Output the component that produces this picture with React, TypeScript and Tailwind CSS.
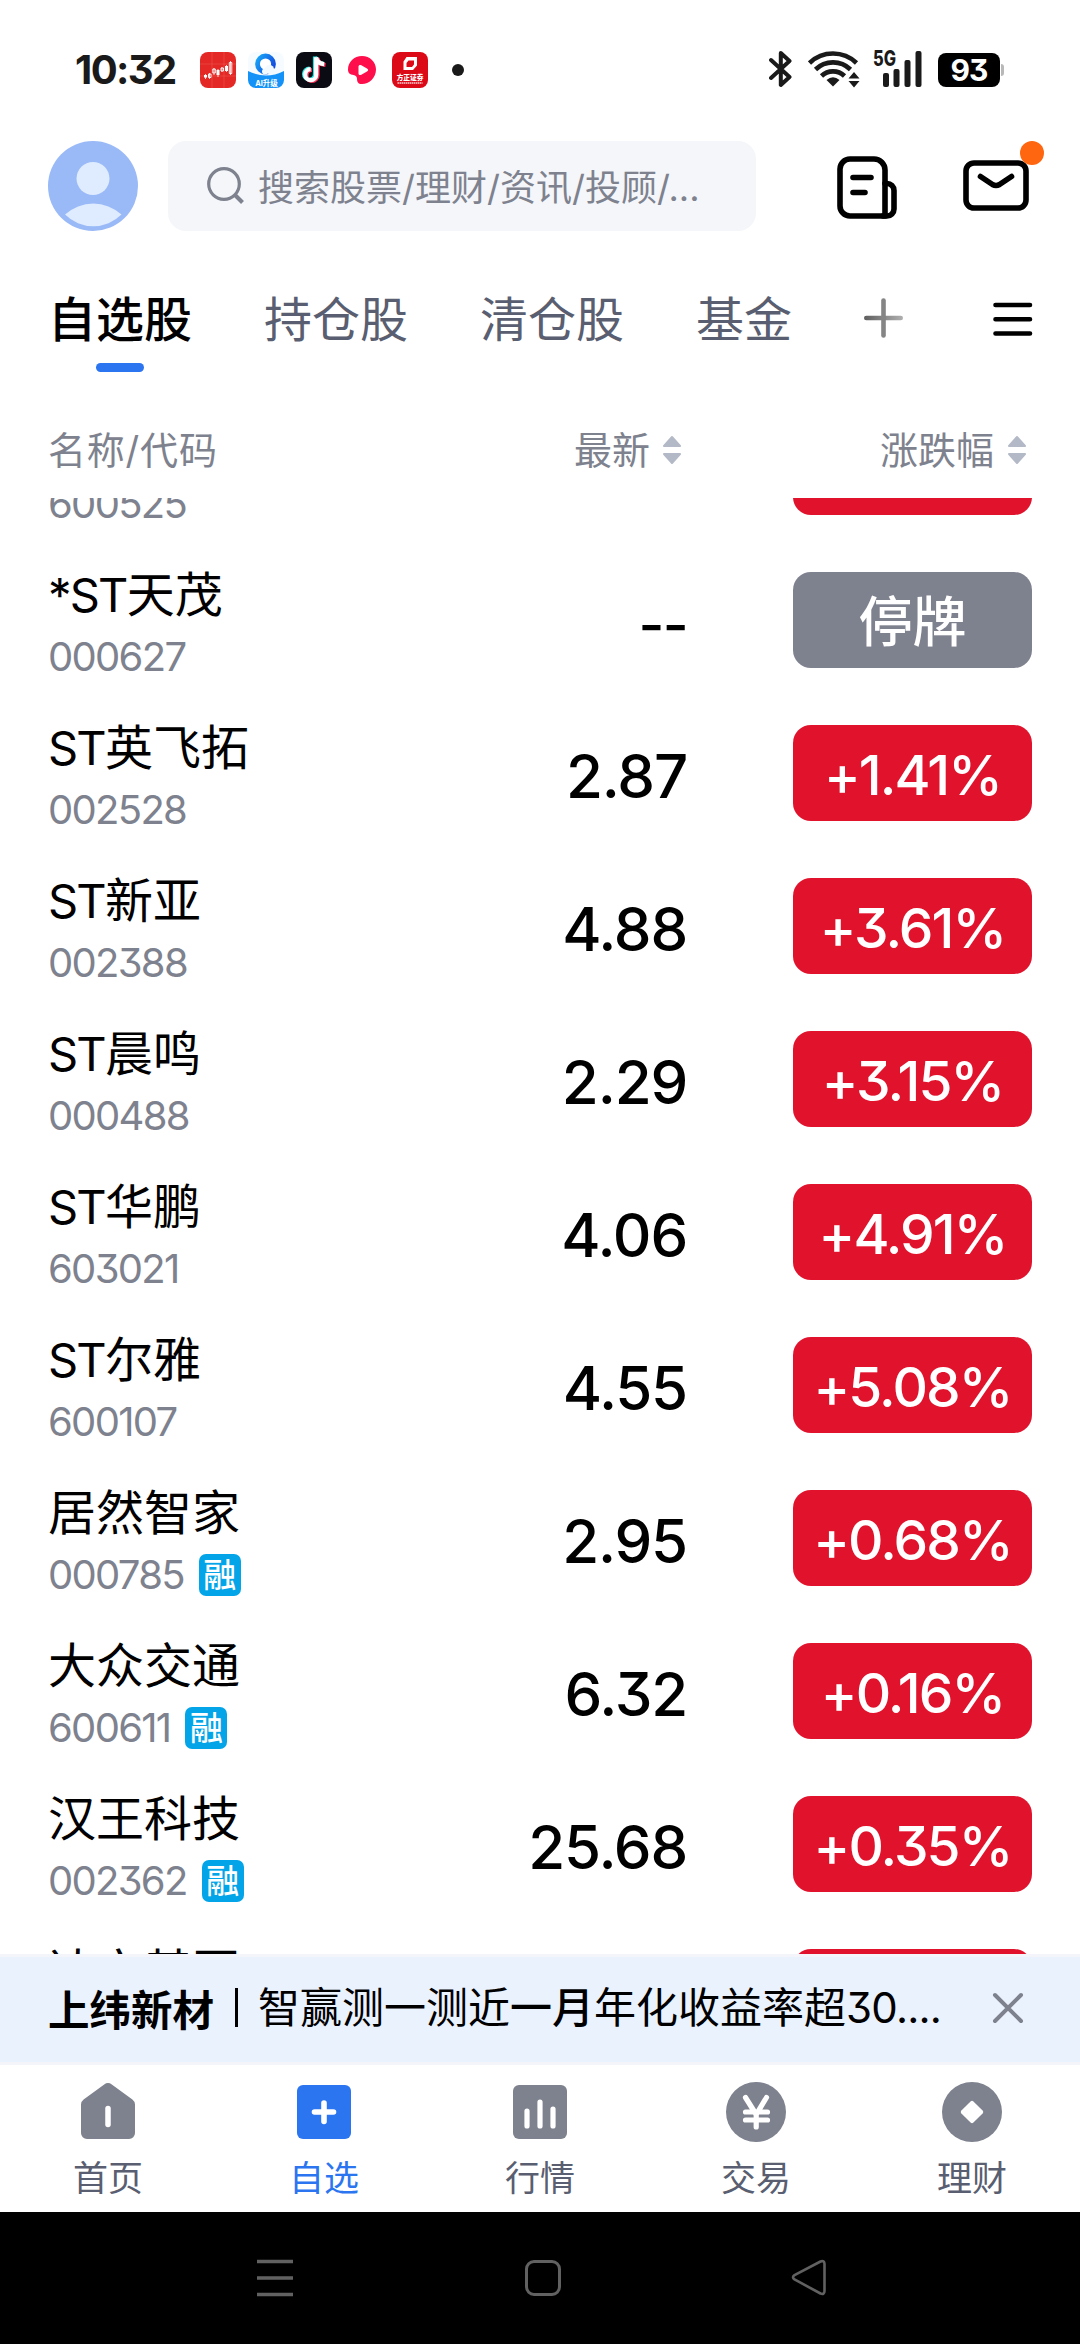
import type { ReactNode } from 'react';

interface Stock {
  prefix?: string;
  name: string;
  code: string;
  price: string;
  change: string | null;
  margin?: boolean;
}

interface NavItem {
  label: string;
  icon: ReactNode;
  active?: boolean;
}

const stocks: Stock[] = [
  { name: '', code: '600525', price: '', change: '' },
  { prefix: '*ST', name: '天茂', code: '000627', price: '--', change: null },
  { prefix: 'ST', name: '英飞拓', code: '002528', price: '2.87', change: '+1.41%' },
  { prefix: 'ST', name: '新亚', code: '002388', price: '4.88', change: '+3.61%' },
  { prefix: 'ST', name: '晨鸣', code: '000488', price: '2.29', change: '+3.15%' },
  { prefix: 'ST', name: '华鹏', code: '603021', price: '4.06', change: '+4.91%' },
  { prefix: 'ST', name: '尔雅', code: '600107', price: '4.55', change: '+5.08%' },
  { name: '居然智家', code: '000785', price: '2.95', change: '+0.68%', margin: true },
  { name: '大众交通', code: '600611', price: '6.32', change: '+0.16%', margin: true },
  { name: '汉王科技', code: '002362', price: '25.68', change: '+0.35%', margin: true },
  { name: '达安基因', code: '', price: '', change: '' }
];

const groups = ['自选股', '持仓股', '清仓股', '基金'];

const navItems: NavItem[] = [
  {
    label: '首页',
    icon: (
      <svg viewBox="0 0 60 60" className="h-[60px] w-[60px]">
        <path d="M26.2 2.4a6.2 6.2 0 0 1 7.6 0L54.4 17.6a6.5 6.5 0 0 1 2.6 5V51a6 6 0 0 1-6 6H9a6 6 0 0 1-6-6V22.6a6.5 6.5 0 0 1 2.6-5Z" fill="#7e828e" />
        <path d="M30 26.5v16" stroke="#fff" strokeWidth="5.5" strokeLinecap="round" />
      </svg>
    )
  },
  {
    label: '自选',
    active: true,
    icon: (
      <svg viewBox="0 0 60 60" className="h-[60px] w-[60px]">
        <rect x="3" y="3" width="54" height="54" rx="6" fill="#2c75f0" />
        <path d="M30 21v18.500M20.500 30h19" stroke="#fff" strokeWidth="5.6" strokeLinecap="round" />
      </svg>
    )
  },
  {
    label: '行情',
    icon: (
      <svg viewBox="0 0 60 60" className="h-[60px] w-[60px]">
        <rect x="3" y="3" width="54" height="54" rx="6" fill="#7e828e" />
        <path d="M17 29v15M30 20v24M43 27v17" stroke="#fff" strokeWidth="5.2" strokeLinecap="round" />
      </svg>
    )
  },
  {
    label: '交易',
    icon: (
      <svg viewBox="0 0 60 60" className="h-[60px] w-[60px]">
        <circle cx="30" cy="30" r="30" fill="#7e828e" />
        <path d="M19.5 15.500 30.2 32.5 40.5 15.500M30.2 32v13M19.500 30h22M19.500 38h22" fill="none" stroke="#fff" strokeWidth="5.2" strokeLinecap="round" strokeLinejoin="round" />
      </svg>
    )
  },
  {
    label: '理财',
    icon: (
      <svg viewBox="0 0 60 60" className="h-[60px] w-[60px]">
        <circle cx="30" cy="30" r="30" fill="#7e828e" />
        <rect x="21.500" y="21.500" width="17" height="17" rx="2" transform="rotate(45 30 30)" fill="#fff" />
      </svg>
    )
  }
];

function StatusBar() {
  return (
    <div className="flex h-[141px] items-start justify-between pl-[75px] pr-[76px] pt-[50px] text-[#1a1a1a]">
      <div className="flex h-10 items-center">
        <span className="w-[125px] whitespace-nowrap text-[40px] font-bold leading-10 tracking-[-1.6px]">10:32</span>
        <div className="flex items-center gap-3">
          <svg viewBox="0 0 36 36" className="h-9 w-9">
            <rect width="36" height="36" rx="8" fill="#e32826" />
            <path d="M0 12h36M0 24h36M12 0v36M24 0v36" stroke="#ee5a50" strokeWidth=".5" />
            <path d="M5.5 22v5M9.5 21v6M14 16v7M18 17v8M22 15v5M26.5 13v7M30.5 9v14" stroke="#fff" strokeWidth=".8" />
            <path d="M4 23h3v2.500H4ZM16.500 18h3v5h-3ZM25 14h3v5h-3Z" fill="#fff" />
            <path d="M8.500 22h2.500v3.500H8.500ZM12.800 17h2.500v4h-2.500ZM21 16h2.500v3H21ZM29.300 10.500h2.500v11h-2.500Z" fill="none" stroke="#fff" strokeWidth=".9" />
          </svg>
          <svg viewBox="0 0 36 36" className="h-9 w-9">
            <defs>
              <linearGradient id="ring" x1="0" y1="0" x2="1" y2=".6">
                <stop stopColor="#17a6f7" />
                <stop offset="1" stopColor="#1450e0" />
              </linearGradient>
            </defs>
            <rect width="36" height="36" rx="8" fill="#f5fbff" />
            <circle cx="17.5" cy="12" r="8" fill="#fff" stroke="url(#ring)" strokeWidth="4.8" />
            <g fill="#f3faff">
              <circle cx="21.5" cy="17.5" r="4.5" />
              <circle cx="17" cy="19.500" r="3" />
              <circle cx="26" cy="19.500" r="3" />
            </g>
            <path d="M0 19q18 9 36 0v9a8 8 0 0 1-8 8H8a8 8 0 0 1-8-8Z" fill="#1592f8" />
            <text x="18.5" y="33.500" textAnchor="middle" fontSize="7.5" fontWeight="700" fill="#fff">AI升级</text>
          </svg>
          <svg viewBox="0 0 36 36" className="h-9 w-9">
            <rect width="36" height="36" rx="8" fill="#0b0b14" />
            <g fill="none" strokeWidth="4.2">
              <path d="M20 5v17.500a5.500 5.500 0 1 1-5.500-5.500M20 5c.5 4 3.500 6.500 8 7" stroke="#25e5e0" transform="translate(-1 -.5)" />
              <path d="M20 5v17.500a5.500 5.500 0 1 1-5.500-5.500M20 5c.5 4 3.500 6.500 8 7" stroke="#fb3158" transform="translate(1.5 1)" />
              <path d="M20 5v17.500a5.500 5.500 0 1 1-5.500-5.500M20 5c.5 4 3.500 6.500 8 7" stroke="#fff" transform="translate(.2 .2)" />
            </g>
          </svg>
          <svg viewBox="0 0 36 36" className="h-9 w-9">
            <path d="M18 4c8 0 14 6 14 13.500C32 26 25 32 18 32c-4 0-5-2-5-5.500-.2-2-1.200-3-3.500-3.500C6 22.500 4 21 4 17.500 4 10 10 4 18 4Z" fill="#fe0f4b" />
            <path d="M14.500 14.500c0-1.500 1.500-2 2.800-1.300l5.700 3.300c1.500.8 1.500 2.200 0 3l-5.700 3.300c-1.300.7-2.800.2-2.800-1.300Z" fill="#fff" />
          </svg>
          <svg viewBox="0 0 36 36" className="h-9 w-9">
            <rect width="36" height="36" rx="8" fill="#dc0a17" />
            <path d="M14.500 5H25v8.500L21 18H11.500V9.500ZM16.500 8.500 14.500 11v4h5.500l2-2.500v-4Z" fill="#fff" fillRule="evenodd" />
            <text x="18" y="28" textAnchor="middle" fontSize="6.7" fontWeight="900" fill="#fff">方正证券</text>
            <path d="M5.500 31h25" stroke="#fff" strokeWidth="1.3" strokeDasharray="1.5 .5" opacity=".8" />
          </svg>
        </div>
        <span className="ml-6 h-3 w-3 rounded-full bg-[#1a1a1a]" />
      </div>
      <div className="flex items-start">
        <svg viewBox="0 0 24 38" className="mr-[15px] h-[38px] w-6">
          <path d="M2 10 20.500 27 11.800 35V3L20.500 11 2 28" fill="none" stroke="#1a1a1a" strokeWidth="4" strokeLinejoin="round" strokeLinecap="round" />
        </svg>
        <svg viewBox="0 0 52 38" className="mr-[13px] h-[38px] w-[52px]">
          <g fill="none" stroke="#1a1a1a" strokeWidth="4.6">
            <path d="M1.500 13a34 34 0 0 1 47 0" />
            <path d="M7.500 19.500a25 25 0 0 1 35 0" />
            <path d="M13.500 26a16.500 16.500 0 0 1 23 0" />
          </g>
          <path d="M25 36.500 18.500 30q6.500-5.500 13 0Z" fill="#1a1a1a" />
          <path d="M40.500 28.500 46 22l5.500 6.500ZM40.500 31h11L46 37.500Z" fill="#1a1a1a" />
        </svg>
        <svg viewBox="0 0 50 38" className="mr-[15px] h-[38px] w-[50px]">
          <text x="0" y="16" fontSize="21" fontWeight="800" fill="#1a1a1a" textLength="23" lengthAdjust="spacingAndGlyphs">5G</text>
          <g fill="#1a1a1a">
            <rect x="10" y="23" width="6" height="14" rx="2" />
            <rect x="20.500" y="19" width="6" height="18" rx="2" />
            <rect x="31.500" y="10" width="6" height="27" rx="2" />
            <rect x="42.500" y="1" width="6" height="36" rx="2" />
          </g>
        </svg>
        <div className="flex items-center pt-[3px]">
          <span className="flex h-[34px] w-[62px] items-center justify-center rounded-[8px] bg-black text-[30px] font-bold leading-none tracking-[-1px] text-white">
            93
          </span>
          <span className="ml-px h-3 w-[3px] rounded-r-[3px] bg-[#b8b8b8]" />
        </div>
      </div>
    </div>
  );
}

function SearchHeader() {
  return (
    <div className="flex h-[90px] items-center pl-12">
      <svg viewBox="0 0 90 90" className="h-[90px] w-[90px]">
        <circle cx="45" cy="45" r="45" fill="#99b9f7" />
        <circle cx="45" cy="37.5" r="16.5" fill="#dfebfe" />
        <path d="M17 73.500a42 42 0 0 1 56.500 0 40 40 0 0 1-56.500 0Z" fill="#dfebfe" />
      </svg>
      <div className="ml-[30px] flex h-[90px] w-[588px] items-center rounded-[18px] bg-[#f4f6fa] pl-[38px]">
        <svg viewBox="0 0 40 40" className="h-10 w-10" fill="none" stroke="#7e828e" strokeWidth="3.2">
          <circle cx="18" cy="18" r="15.3" />
          <path d="m28.500 28.500 8 8" strokeWidth="4" />
        </svg>
        <span className="ml-3 whitespace-nowrap pt-[3px] text-[36px] leading-10 text-[#7e828e]">
          搜索股票/理财/资讯/投顾/...
        </span>
      </div>
      <svg viewBox="0 0 62 66" className="ml-[80px] mt-1 h-[66px] w-[62px]" fill="none" stroke="#000" strokeWidth="5.6" strokeLinecap="round" strokeLinejoin="round">
        <path d="M14 4h24a11 11 0 0 1 11 11v46H14A10 10 0 0 1 4 51V14A10 10 0 0 1 14 4Z" />
        <path d="M49 28.500h2a7 7 0 0 1 7 7V54a7 7 0 0 1-7 7h-4M17 22.500h18M17 37.500h12" />
      </svg>
      <div className="relative ml-16 h-[52px] w-[68px]">
        <svg viewBox="0 0 68 52" className="h-[52px] w-[68px]" fill="none" stroke="#000" strokeWidth="5.6" strokeLinecap="round" strokeLinejoin="round">
          <rect x="4" y="3" width="60" height="45" rx="8" />
          <path d="m18.500 16.500 12 8q3.500 2 7 0l12-8" />
        </svg>
        <span className="absolute -top-[19px] left-[58px] h-6 w-6 rounded-full bg-[#ff660f]" />
      </div>
    </div>
  );
}

function GroupTabs() {
  return (
    <div className="flex h-[165px] items-start pl-12 pt-[61px]">
      <div className="flex gap-[72px]">
        {groups.map((group, index) => (
          <div key={group} className="flex flex-col items-center">
            <span className={`whitespace-nowrap text-[48px] leading-[56px] ${index === 0 ? 'font-medium text-black' : 'text-[#595e70]'}`}>
              {group}
            </span>
            {index === 0 && <span className="mt-[15px] h-[9px] w-12 rounded-full bg-[#2c75f0]" />}
          </div>
        ))}
      </div>
      <svg viewBox="0 0 40 40" className="ml-[71px] mt-[6px] h-10 w-10" strokeLinecap="round" strokeWidth="4.6">
        <defs>
          <linearGradient id="plus" gradientUnits="userSpaceOnUse" x1="0" y1="0" x2="40" y2="0">
            <stop stopColor="#5c5c5c" />
            <stop offset="1" stopColor="#b0b0b0" />
          </linearGradient>
        </defs>
        <rect x="1" y="17.700" width="39" height="4.600" rx="2.300" fill="url(#plus)" />
        <path d="M20.500 2.500v35" stroke="#858585" />
      </svg>
      <svg viewBox="0 0 40 40" className="ml-[90px] mt-[7px] h-10 w-10" stroke="#000" strokeLinecap="round" strokeWidth="4.6">
        <path d="M2.500 6h34.500M2.500 20.300h34.500M2.500 34.500h34.500" />
      </svg>
    </div>
  );
}

function SortArrows() {
  return (
    <svg viewBox="0 0 18 30" className="h-[30px] w-[18px]" fill="#b3b9c6" stroke="#b3b9c6" strokeWidth="2" strokeLinejoin="round">
      <path d="M9 2 17 11H1ZM9 28 17 19H1Z" />
    </svg>
  );
}

function ColumnHeader() {
  return (
    <div className="flex h-[102px] items-center pl-12 pt-[6px] text-[38px] leading-[42px] text-[#7e828e]">
      <span className="w-[300px] tracking-[0.8px]">名称/代码</span>
      <div className="flex w-[333px] items-center justify-end gap-[13px]">
        最新
        <SortArrows />
      </div>
      <div className="flex w-[345px] items-center justify-end gap-[14px]">
        涨跌幅
        <SortArrows />
      </div>
    </div>
  );
}

function StockRow({ stock }: { stock: Stock }) {
  const suspended = stock.change === null;

  return (
    <div className="flex h-[153px] shrink-0 items-start pl-12">
      <div className="w-[340px] pt-[25px]">
        <div className="h-[54px] whitespace-nowrap text-[48px] leading-[54px] text-black">
          {stock.prefix && <span className="text-[47px] tracking-[-1.8px]">{stock.prefix}</span>}
          {stock.name}
        </div>
        <div className="mt-[14px] flex h-[42px] items-center">
          <span className="text-[40px] leading-[42px] tracking-[-1.7px] text-[#7e828e]">{stock.code}</span>
          {stock.margin && (
            <span className="ml-[15px] flex h-[42px] w-[42px] items-center justify-center rounded-[7px] bg-[#04a4e8] text-[33px] font-medium leading-none text-white">
              融
            </span>
          )}
        </div>
      </div>
      <div className="w-[299px] pt-[50px] text-right text-[60px] font-medium leading-[60px] tracking-[-1.2px] text-black">
        {suspended ? <span className="text-[56px] tracking-[-1.6px]">{stock.price}</span> : stock.price}
      </div>
      <div
        className={`ml-[106px] mt-[29px] flex h-24 w-[239px] items-center justify-center whitespace-nowrap rounded-[18px] font-medium leading-none text-white ${
          suspended ? 'bg-[#7e828e] pt-[5px] text-[54px]' : 'bg-[#e0122c] pt-1 text-[55px] tracking-[-1.9px]'
        }`}
      >
        {suspended ? '停牌' : stock.change}
      </div>
    </div>
  );
}

function NoticeBar() {
  return (
    <div className="flex h-[111px] items-center border-y-[3px] border-[#f3f5fa] bg-[#eaf2fe] pl-12 text-[42px] leading-[50px] text-black">
      <span className="pt-[2px] text-[41.5px] font-bold">上纬新材</span>
      <span className="-mt-1 ml-[21px] h-[39px] w-[3px] bg-black" />
      <span className="-mt-1 ml-5 whitespace-nowrap">
        智赢测一测近<span className="font-medium">一月</span>年化收益率超<span className="tracking-[-0.8px]">30....</span>
      </span>
      <svg viewBox="0 0 32 32" className="-mt-[3px] ml-auto mr-[56px] h-8 w-8" stroke="#7e828e" strokeWidth="4" strokeLinecap="round">
        <path d="m3 3 26 26M29 3 3 29" />
      </svg>
    </div>
  );
}

function BottomNav() {
  return (
    <nav className="flex h-[147px]">
      {navItems.map((item) => (
        <div key={item.label} className="flex flex-1 flex-col items-center pt-[17px]">
          {item.icon}
          <span className={`mt-4 text-[35px] leading-[40px] ${item.active ? 'text-[#2c75f0]' : 'text-[#595e70]'}`}>
            {item.label}
          </span>
        </div>
      ))}
    </nav>
  );
}

function SystemNav() {
  return (
    <div className="flex h-[132px] items-start bg-black pl-[255px] pt-[46px]">
      <svg viewBox="0 0 40 40" className="h-10 w-10" stroke="#616161" strokeWidth="3.3">
        <path d="M2 3.500h36M2 20h36M2 36.500h36" />
      </svg>
      <svg viewBox="0 0 40 40" className="ml-[228px] h-10 w-10" fill="none" stroke="#616161" strokeWidth="3">
        <rect x="3.500" y="3.500" width="33" height="33" rx="7.500" />
      </svg>
      <svg viewBox="0 0 40 40" className="ml-[226px] h-10 w-10" fill="none" stroke="#616161" strokeWidth="2.6" strokeLinejoin="round">
        <path d="M31.500 3.500 5.500 17.200q-3 2 0 4.200L31.500 35.500q4 1.300 4-2.500V6q0-3.800-4-2.500Z" />
      </svg>
    </div>
  );
}

export default function App() {
  return (
    <div className="flex h-[2344px] w-[1080px] flex-col overflow-hidden bg-white font-[Inter,'Noto_Sans_CJK_SC',sans-serif] [font-feature-settings:'cv09'_1]">
      <StatusBar />
      <SearchHeader />
      <GroupTabs />
      <ColumnHeader />
      <div className="h-[1456px] overflow-hidden">
        <div className="-mt-[108px] flex flex-col">
          {stocks.map((stock) => (
            <StockRow key={stock.code || stock.name} stock={stock} />
          ))}
        </div>
      </div>
      <NoticeBar />
      <BottomNav />
      <SystemNav />
    </div>
  );
}
